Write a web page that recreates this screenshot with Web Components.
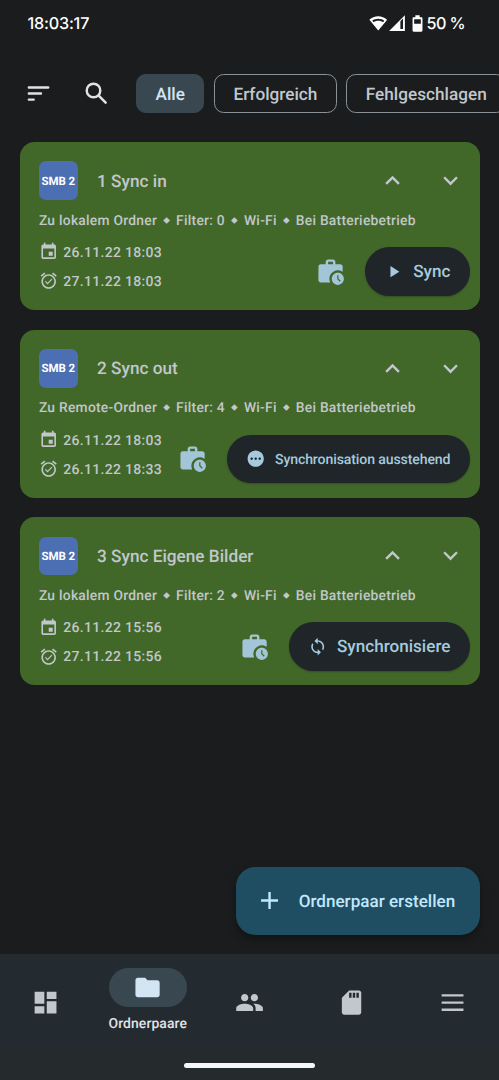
<!DOCTYPE html>
<html lang="de">
<head>
<meta charset="utf-8">
<meta name="viewport" content="width=device-width, initial-scale=1">
<title>Ordnerpaare</title>
<style>
  html, body {
    margin: 0;
    height: 100%;
    overflow: hidden;
    background: #1a1c1e;
  }
  body {
    font-family: Roboto, sans-serif;
    font-weight: 500;
    color: #c1c7cc;
    text-rendering: geometricPrecision;
  }
</style>
</head>
<body>
<sync-app></sync-app>

<script>
  // Icon paths on a 24x24 grid
  const ICONS = {
    sort: '<path d="M4 7h16M4 12h10M4 17h4" fill="none" stroke="currentColor" stroke-width="2" stroke-linecap="round"/>',
    search: '<circle cx="9.5" cy="9.5" r="5.6" fill="none" stroke="currentColor" stroke-width="2"/><path d="M14 14l5.5 5.5" fill="none" stroke="currentColor" stroke-width="2.1" stroke-linecap="round"/>',
    up: '<path d="M12 8l-6 6 1.41 1.41L12 10.83l4.59 4.58L18 14z"/>',
    down: '<path d="M16.59 8.59L12 13.17 7.41 8.59 6 10l6 6 6-6z"/>',
    event: '<path d="M17 12h-5v5h5v-5zM16 1v2H8V1H6v2H5c-1.11 0-1.99.9-1.99 2L3 19c0 1.1.89 2 2 2h14c1.1 0 2-.9 2-2V5c0-1.1-.9-2-2-2h-1V1h-2zm3 18H5V8h14v11z"/>',
    alarm: '<path d="M22 5.72l-4.6-3.86-1.29 1.53 4.6 3.86L22 5.72zM7.88 3.39L6.6 1.86 2 5.71l1.29 1.53 4.59-3.85zM12 4c-4.97 0-9 4.03-9 9s4.02 9 9 9c4.97 0 9-4.03 9-9s-4.03-9-9-9zm0 16c-3.87 0-7-3.13-7-7s3.13-7 7-7 7 3.13 7 7-3.13 7-7 7zm-1.46-5.47L8.41 12.4l-1.06 1.06 3.18 3.18 6-6-1.06-1.06-4.93 4.95z"/>',
    work: '<path d="M18 11c1.49 0 2.87.47 4 1.26V8c0-1.11-.89-2-2-2h-4V4c0-1.11-.89-2-2-2h-4c-1.11 0-2 .89-2 2v2H4c-1.11 0-1.99.89-1.99 2L2 19c0 1.11.89 2 2 2h7.68A6.995 6.995 0 0 1 18 11zm-8-7h4v2h-4V4z"/><path d="M18 13c-2.76 0-5 2.24-5 5s2.24 5 5 5 5-2.24 5-5-2.24-5-5-5zm1.65 7.35L17.5 18.2V15h1v2.79l1.85 1.85-.7.71z"/>',
    play: '<path d="M8 5v14l11-7z"/>',
    pending: '<path d="M12 2C6.48 2 2 6.48 2 12s4.48 10 10 10 10-4.48 10-10S17.52 2 12 2zM7 13.5c-.83 0-1.5-.67-1.5-1.5s.67-1.5 1.5-1.5 1.5.67 1.5 1.5-.67 1.5-1.5 1.5zm5 0c-.83 0-1.5-.67-1.5-1.5s.67-1.5 1.5-1.5 1.5.67 1.5 1.5-.67 1.5-1.5 1.5zm5 0c-.83 0-1.5-.67-1.5-1.5s.67-1.5 1.5-1.5 1.5.67 1.5 1.5-.67 1.5-1.5 1.5z"/>',
    sync: '<path d="M12 4V1L8 5l4 4V6c3.31 0 6 2.69 6 6 0 1.01-.25 1.97-.7 2.8l1.46 1.46C19.54 15.03 20 13.57 20 12c0-4.42-3.58-8-8-8zm0 14c-3.31 0-6-2.69-6-6 0-1.01.25-1.97.7-2.8L5.24 7.74C4.46 8.97 4 10.43 4 12c0 4.42 3.58 8 8 8v3l4-4-4-4v3z"/>',
    add: '<path d="M19 13h-6v6h-2v-6H5v-2h6V5h2v6h6v2z"/>',
    dashboard: '<path d="M3 13h8V3H3v10zm0 8h8v-6H3v6zm10 0h8V11h-8v10zm0-18v6h8V3h-8z"/>',
    folder: '<path d="M10 4H4c-1.1 0-1.99.9-1.99 2L2 18c0 1.1.9 2 2 2h16c1.1 0 2-.9 2-2V8c0-1.1-.9-2-2-2h-8l-2-2z"/>',
    people: '<path d="M16 11c1.66 0 2.99-1.34 2.99-3S17.66 5 16 5c-1.66 0-3 1.34-3 3s1.34 3 3 3zm-8 0c1.66 0 2.99-1.34 2.99-3S9.66 5 8 5C6.34 5 5 6.34 5 8s1.34 3 3 3zm0 2c-2.33 0-7 1.17-7 3.5V19h14v-2.5c0-2.33-4.67-3.5-7-3.5zm8 0c-.29 0-.62.02-.97.05 1.16.84 1.97 1.97 1.97 3.45V19h6v-2.5c0-2.33-4.67-3.5-7-3.5z"/>',
    sdcard: '<path d="M18 2h-8L4.02 8 4 20c0 1.1.9 2 2 2h12c1.1 0 2-.9 2-2V4c0-1.1-.9-2-2-2zm-6 6h-2V4h2v4zm3 0h-2V4h2v4zm3 0h-2V4h2v4z"/>',
    menu: '<path d="M3 17h18v1.9H3zM3 11.1h18V13H3zM3 5.1h18V7H3z"/>',
    wifi: '<path fill-rule="evenodd" d="M12 21.5L.5 7.6C3.6 4.6 7.6 3 12 3s8.4 1.6 11.5 4.6zM4.2 8.7l1.6 2C7.5 9.5 9.7 8.8 12 8.8s4.5.7 6.2 1.9l1.6-2C17.6 7.1 14.9 6.2 12 6.2s-5.6.9-7.8 2.5z"/>',
    signal: '<path fill-rule="evenodd" d="M1.500 22.500h21V1.500zM16.500 9.500l3.500-3.500V20h-3.500z"/>',
    battery: '<path fill-rule="evenodd" d="M9 .5h6V3h2.500c1 0 1.500.6 1.500 1.500v17c0 1-.6 2-1.500 2h-11c-.9 0-1.500-1-1.500-2v-17C5 3.600 5.500 3 6.500 3H9zM7.300 6v6.500h9.400V6z"/>'
  };

  /**
   * Attach an open shadow root and fill it.
   */
  function render(el, css, html) {
    el.attachShadow({ mode: "open" }).innerHTML = `<style>${css}</style>${html}`;
  }

  // <md-icon name="search">
  class MdIcon extends HTMLElement {
    connectedCallback() {
      render(this, `
        :host { display: block; flex: none; width: var(--size, 29.1px); height: var(--size, 29.1px); }
        svg { display: block; width: 100%; height: 100%; fill: currentColor; }
      `, `<svg viewBox="0 0 24 24">${ICONS[this.getAttribute("name")]}</svg>`);
    }
  }

  class StatusBar extends HTMLElement {
    connectedCallback() {
      render(this, `
        :host {
          display: flex; align-items: center; height: 46px; padding: 0 34px 0 27.5px;
          font: 500 16.2px Inter, sans-serif; color: #fff;
        }
        .time { flex: 1; letter-spacing: -0.2px; }
        .wifi { --size: 18.5px; }
        .signal { --size: 18px; margin-left: 1px; }
        .battery { --size: 17px; margin: 0 1px 0 2.5px; }
        .level { letter-spacing: -0.6px; }
      `, `
        <span class="time">18:03:17</span>
        <md-icon class="wifi" name="wifi"></md-icon>
        <md-icon class="signal" name="signal"></md-icon>
        <md-icon class="battery" name="battery"></md-icon>
        <span class="level">50 %</span>
      `);
    }
  }

  class FilterChip extends HTMLElement {
    connectedCallback() {
      render(this, `
        :host {
          display: flex; flex: none; align-items: center; justify-content: center;
          box-sizing: border-box; height: 39px; padding: 2px 18.4px 0;
          border: 1.2px solid #8a9297; border-radius: 9.7px;
          font-size: 17.2px; letter-spacing: 0; white-space: nowrap;
        }
        :host([selected]) { background: #394850; border-color: #394850; color: #d2e5f2; }
      `, `<slot></slot>`);
    }
  }

  class FilterBar extends HTMLElement {
    connectedCallback() {
      render(this, `
        :host {
          display: flex; align-items: center; height: 39px;
          margin-top: 28px; padding-left: 24px; overflow: hidden;
        }
        md-icon { color: #e2e2e5; }
        .search { margin: 0 25px 0 29px; }
        .chips { display: flex; gap: 9.7px; }
      `, `
        <md-icon name="sort"></md-icon>
        <md-icon class="search" name="search"></md-icon>
        <div class="chips"><slot></slot></div>
      `);
    }
  }

  // Round pill button: <action-button icon="play">Sync</action-button>
  class ActionButton extends HTMLElement {
    connectedCallback() {
      render(this, `
        :host {
          display: flex; align-items: center; gap: 9.7px; box-sizing: border-box;
          height: 48.5px; padding: 0 19.4px; border-radius: 25px;
          background: #1f2529; color: #a6cadd;
          font-size: 17.1px; letter-spacing: 0; white-space: nowrap;
          box-shadow: 0 1px 2px rgba(0, 0, 0, 0.25);
        }
        :host([small]) { font-size: 14.1px; letter-spacing: -0.12px; }
        md-icon { --size: 19.4px; }
        span { padding-top: 2px; }
      `, `<md-icon name="${this.getAttribute("icon")}"></md-icon><span><slot></slot></span>`);
    }
  }

  /**
   * Card for one folder pair. Takes name, info (separated by "|"),
   * last and next as attributes; the action button goes in the slot.
   */
  class FolderPairCard extends HTMLElement {
    connectedCallback() {
      const info = this.getAttribute("info").split("|")
        .map((t) => `<span>${t}</span>`).join('<span class="dot">⬥</span>');
      render(this, `
        :host {
          display: flex; flex-direction: column; box-sizing: border-box;
          height: 168px; padding: 19.4px 9.7px 14.5px 19.4px;
          background: #426829; border-radius: 14.56px;
        }
        .head { display: flex; align-items: center; height: 38.8px; padding-right: 5px; }
        .badge {
          width: 38.8px; height: 38.8px; border-radius: 7px; background: #4c6eb3;
          display: flex; align-items: center; justify-content: center;
          color: #fff; font-size: 11.5px; font-weight: 700; letter-spacing: -0.1px; white-space: nowrap;
        }
        .name { flex: 1; margin-left: 19.4px; padding-top: 2px; font-size: 17.2px; letter-spacing: 0; }
        .up { margin-right: 29.1px; }
        .info { display: flex; margin-top: 11.4px; font-size: 13.8px; line-height: 18px; letter-spacing: 0.27px; white-space: nowrap; }
        .dot { width: 19px; text-align: center; font-family: "DejaVu Sans", sans-serif; font-size: 9.5px; letter-spacing: 0; }
        .foot { display: flex; flex: 1; align-items: flex-end; justify-content: space-between; }
        .times { display: flex; flex-direction: column; gap: 9.6px; margin-bottom: 4.7px; }
        .times div { display: flex; align-items: center; gap: 5px; height: 19.4px; font-size: 14px; letter-spacing: 0.3px; white-space: nowrap; }
        .times span { padding-top: 2px; }
        .times md-icon { --size: 19.4px; }
        .actions { display: flex; align-items: center; gap: 19.4px; }
        .actions md-icon { color: #a3c5d8; }
      `, `
        <div class="head">
          <div class="badge">SMB 2</div>
          <div class="name">${this.getAttribute("name")}</div>
          <md-icon class="up" name="up"></md-icon>
          <md-icon name="down"></md-icon>
        </div>
        <div class="info">${info}</div>
        <div class="foot">
          <div class="times">
            <div><md-icon name="event"></md-icon><span>${this.getAttribute("last")}</span></div>
            <div><md-icon name="alarm"></md-icon><span>${this.getAttribute("next")}</span></div>
          </div>
          <div class="actions"><md-icon name="work"></md-icon><slot></slot></div>
        </div>
      `);
    }
  }

  class CreateFab extends HTMLElement {
    connectedCallback() {
      render(this, `
        :host {
          display: flex; align-items: center; gap: 14.5px; box-sizing: border-box;
          height: 67.9px; padding: 0 24.3px 0 19.4px; border-radius: 19.4px;
          background: #1f4d61; color: #c0e8fd;
          font-size: 17.1px; letter-spacing: 0; white-space: nowrap;
          box-shadow: 0 4px 9px rgba(0, 0, 0, 0.35);
        }
        span { padding-top: 2px; }
      `, `<md-icon name="add"></md-icon><span><slot></slot></span>`);
    }
  }

  class NavItem extends HTMLElement {
    connectedCallback() {
      render(this, `
        :host {
          display: flex; flex: 1; flex-direction: column; align-items: center; justify-content: center;
          box-sizing: border-box; gap: 8px;
          font-size: 13.9px; letter-spacing: 0.1px; line-height: 18px; color: #c1c7cb;
        }
        .pill { display: flex; align-items: center; justify-content: center; width: 77.7px; height: 38.8px; border-radius: 19.4px; }
        :host([active]) { padding-bottom: 3.5px; color: #e2e4e8; }
        :host([active]) .pill { background: #394850; color: #d3e5f3; }
      `, `<div class="pill"><md-icon name="${this.getAttribute("icon")}"></md-icon></div><slot></slot>`);
    }
  }

  class BottomNav extends HTMLElement {
    connectedCallback() {
      render(this, `
        :host { display: flex; flex-direction: column; height: 126px; background: #252a2d; }
        .items { display: flex; gap: 9.7px; height: 97px; background: #232b30; }
        .handle { width: 131px; height: 5px; margin: 12px auto 0; border-radius: 3px; background: #f6f6f6; }
      `, `<div class="items"><slot></slot></div><div class="handle"></div>`);
    }
  }

  class SyncApp extends HTMLElement {
    connectedCallback() {
      render(this, `
        :host { display: flex; flex-direction: column; height: 1080px; background: #1a1c1e; }
        main { display: flex; flex: 1; flex-direction: column; gap: 19.6px; padding: 29px 19.5px 19.4px; }
        create-fab { margin: auto 0 0 auto; }
      `, `
        <status-bar></status-bar>
        <filter-bar>
          <filter-chip selected>Alle</filter-chip>
          <filter-chip>Erfolgreich</filter-chip>
          <filter-chip>Fehlgeschlagen</filter-chip>
        </filter-bar>
        <main>
          <folder-pair-card name="1 Sync in" info="Zu lokalem Ordner|Filter: 0|Wi-Fi|Bei Batteriebetrieb"
            last="26.11.22 18:03" next="27.11.22 18:03">
            <action-button icon="play">Sync</action-button>
          </folder-pair-card>
          <folder-pair-card name="2 Sync out" info="Zu Remote-Ordner|Filter: 4|Wi-Fi|Bei Batteriebetrieb"
            last="26.11.22 18:03" next="26.11.22 18:33">
            <action-button icon="pending" small>Synchronisation ausstehend</action-button>
          </folder-pair-card>
          <folder-pair-card name="3 Sync Eigene Bilder" info="Zu lokalem Ordner|Filter: 2|Wi-Fi|Bei Batteriebetrieb"
            last="26.11.22 15:56" next="27.11.22 15:56">
            <action-button icon="sync">Synchronisiere</action-button>
          </folder-pair-card>
          <create-fab>Ordnerpaar erstellen</create-fab>
        </main>
        <bottom-nav>
          <nav-item icon="dashboard"></nav-item>
          <nav-item icon="folder" active>Ordnerpaare</nav-item>
          <nav-item icon="people"></nav-item>
          <nav-item icon="sdcard"></nav-item>
          <nav-item icon="menu"></nav-item>
        </bottom-nav>
      `);
    }
  }

  customElements.define("md-icon", MdIcon);
  customElements.define("status-bar", StatusBar);
  customElements.define("filter-chip", FilterChip);
  customElements.define("filter-bar", FilterBar);
  customElements.define("action-button", ActionButton);
  customElements.define("folder-pair-card", FolderPairCard);
  customElements.define("create-fab", CreateFab);
  customElements.define("nav-item", NavItem);
  customElements.define("bottom-nav", BottomNav);
  customElements.define("sync-app", SyncApp);
</script>
</body>
</html>
